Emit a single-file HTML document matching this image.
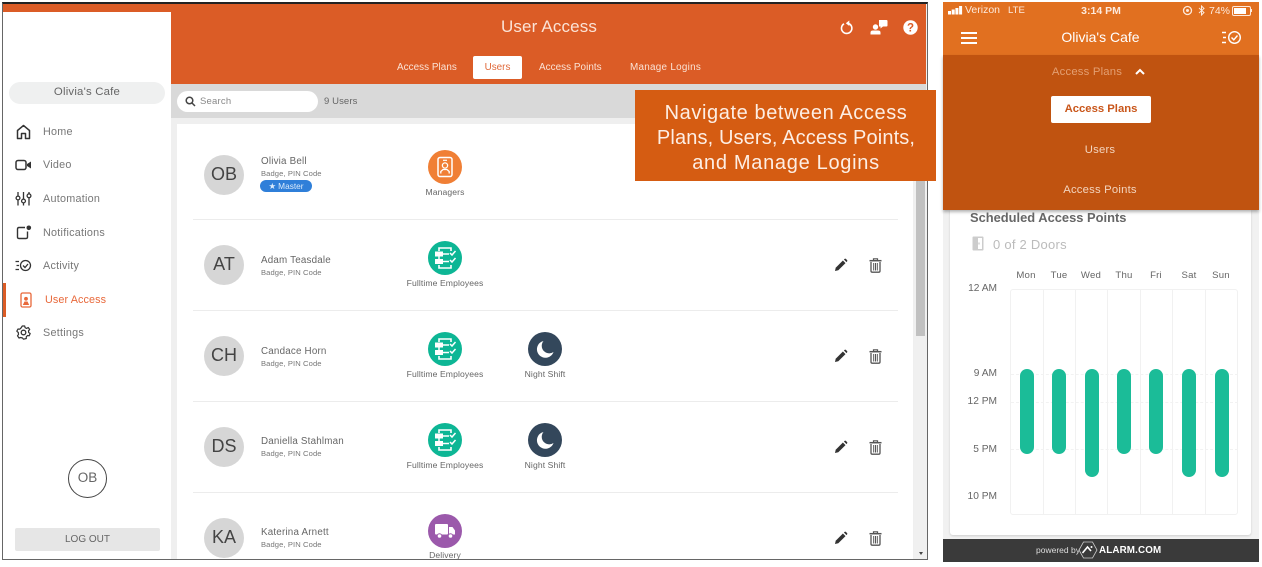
<!DOCTYPE html>
<html><head><meta charset="utf-8">
<style>
html,body{margin:0;padding:0;background:#fff}
#r{position:relative;width:1262px;height:567px;overflow:hidden;background:#fff;font-family:"Liberation Sans",sans-serif;color:#666}
#r div,#r svg{position:absolute}
.t{white-space:nowrap;line-height:1}
.c{transform:translateX(-50%);text-align:center}
.av{width:40px;height:40px;border-radius:50%;background:#d6d6d6;color:#444;font-size:18px;line-height:39px;text-align:center;left:204px}
.nm{left:261px;font-size:9.8px;color:#666;letter-spacing:.2px}
.sb{left:261px;font-size:7.6px;color:#777;letter-spacing:.1px}
.lb{font-size:8.6px;color:#666;letter-spacing:.1px}
.nav{left:43px;font-size:10.8px;color:#777;letter-spacing:.25px}
.sep{left:193px;width:705px;height:1px;background:#ececec}
.ic{width:34px;height:34px;border-radius:50%}
.tb{font-size:9.9px;color:#fbe3d6;letter-spacing:.05px}
.d{font-size:9.6px;color:#666;letter-spacing:.2px}
.h{font-size:10.2px;color:#666;width:40px;text-align:right;left:957px}
.v{top:290px;width:1px;height:225px;background:#f1f1f1}
.dh{left:1011px;width:227px;height:0;border-top:1px dashed #f2f2f2}
.b{top:369px;width:14px;border-radius:7px;background:#1bbc98}
</style></head><body><div id="r">

<!-- desktop window -->
<div style="left:2px;top:2px;width:926px;height:558px;background:#f0f0f0;box-sizing:border-box;border:1px solid #666;border-top:2px solid #222;overflow:hidden"></div>
<div style="left:3px;top:4px;width:923px;height:80px;background:#db5c26"></div>
<div style="left:171px;top:84px;width:755px;height:34px;background:#d9d9d9"></div>
<div style="left:171px;top:118px;width:755px;height:441px;background:#efefef"></div>
<div style="left:177px;top:124px;width:736px;height:435px;background:#fff"></div>
<div style="left:914px;top:118px;width:12px;height:441px;background:#f0f0f0"></div>
<div style="left:916px;top:124px;width:9px;height:212px;background:#c1c1c1"></div>
<div style="left:919px;top:552px;width:0;height:0;border-left:2.5px solid transparent;border-right:2.5px solid transparent;border-top:3px solid #444"></div>

<!-- sidebar -->
<div style="left:3px;top:12px;width:168px;height:547px;background:#fff"></div>
<div style="left:9px;top:82px;width:156px;height:22px;border-radius:11px;background:#eff0f0"></div>
<div class="t c" style="left:87px;top:87px;font-size:11.4px;color:#666;letter-spacing:.2px">Olivia's Cafe</div>

<svg style="left:16px;top:124px" width="15" height="16" viewBox="0 0 15 16" fill="none" stroke="#333" stroke-width="1.5"><path d="M1.5 14.5V6.5L7.5 1.5L13.5 6.5V14.5H9.5V9.5H5.5V14.5Z" stroke-linejoin="round"/></svg>
<div class="t nav" style="top:127px">Home</div>
<svg style="left:15px;top:159px" width="17" height="12" viewBox="0 0 17 12" fill="none"><rect x="1" y="1.5" width="10" height="9" rx="2" stroke="#333" stroke-width="1.5"/><path d="M12 5L16 2.5V9.5L12 7Z" fill="#333"/></svg>
<div class="t nav" style="top:160px">Video</div>
<svg style="left:15px;top:191px" width="17" height="15" viewBox="0 0 17 15" fill="none" stroke="#333" stroke-width="1.3"><path d="M3 1V4.5M3 9V14.5M8.500 1V8M8.500 12V14.500M14 1V2.500M14 7V14.500"/><circle cx="3" cy="7" r="1.900"/><circle cx="8.500" cy="10" r="1.900"/><circle cx="14" cy="4.800" r="1.900"/></svg>
<div class="t nav" style="top:194px">Automation</div>
<svg style="left:16px;top:225px" width="16" height="15" viewBox="0 0 16 15" fill="none"><path d="M9 2.500H3Q1.500 2.500 1.500 4V12Q1.500 13.500 3 13.500H10Q11.500 13.500 11.500 12V6.500" stroke="#333" stroke-width="1.400"/><circle cx="12.800" cy="2.800" r="2.300" fill="#333"/></svg>
<div class="t nav" style="top:228px">Notifications</div>
<svg style="left:15px;top:259px" width="17" height="13" viewBox="0 0 17 13" fill="none" stroke="#333" stroke-width="1.300"><path d="M0.500 2.500H4M1.500 6.500H4M0.500 10.500H4"/><circle cx="10.500" cy="6.500" r="5"/><path d="M8 6.500L10 8.500L13 5"/></svg>
<div class="t nav" style="top:261px">Activity</div>
<div style="left:3px;top:283px;width:3px;height:34px;background:#db5c26"></div>
<svg style="left:20px;top:292px" width="12" height="16" viewBox="0 0 12 16" fill="none"><rect x="1" y="1" width="10" height="14" rx="1.500" stroke="#e8683a" stroke-width="1.300"/><circle cx="6" cy="6.800" r="1.900" fill="#e8683a"/><path d="M2.800 13L4.500 9.500H7.500L9.200 13Z" fill="#e8683a"/></svg>
<div class="t nav" style="left:45px;top:295px;color:#e8683a;letter-spacing:.1px">User Access</div>
<svg style="left:16px;top:325px" width="15" height="15" viewBox="0 0 15 15" fill="none" stroke="#333"><circle cx="7.500" cy="7.500" r="2.300" stroke-width="1.300"/><path d="M6.300 1H8.700L9.100 2.700L10.700 3.400L12.200 2.500L13.700 4.500L12.500 5.800L12.700 7.500L14.200 8.500L13.200 10.800L11.500 10.500L10.300 11.800L10.300 13.500L7.500 14.200L6.500 13L4.700 12.500L3 13L1.500 10.800L2.500 9.500L2.300 7.500L0.800 6.200L2 4L3.700 4.200L5 3L6.300 1Z" stroke-width="1.200" stroke-linejoin="round"/></svg>
<div class="t nav" style="top:328px">Settings</div>

<div style="left:68px;top:459px;width:39px;height:39px;box-sizing:border-box;border:1.500px solid #444;border-radius:50%;text-align:center;line-height:35px;font-size:13.500px;color:#666">OB</div>
<div style="left:15px;top:528px;width:145px;height:23px;background:#e6e6e6;border-radius:2px;text-align:center;line-height:24px;font-size:10px;color:#666">LOG OUT</div>

<!-- header -->
<div class="t c" style="left:549px;top:18px;font-size:17px;color:#fbe3d6;letter-spacing:.15px">User Access</div>
<svg style="left:840px;top:20px" width="14" height="15" viewBox="0 0 14 15" fill="none"><path d="M4 3.800A5.200 5.200 0 1 0 9 3.600" stroke="#fff" stroke-width="1.600"/><path d="M8.300 0.500V6L4.800 3.200Z" fill="#fff" transform="translate(1 0)"/></svg>
<svg style="left:870px;top:19px" width="18" height="16" viewBox="0 0 18 16" fill="#fff"><path d="M9 1H16.500Q17.500 1 17.500 2V6.500Q17.500 7.500 16.500 7.500H13L10.500 9.500V7.500H9Z"/><circle cx="5.500" cy="8" r="2.700"/><path d="M0.500 15.500V13.500Q0.500 11.500 3 11.500H8Q10.500 11.500 10.500 13.500V15.500Z"/></svg>
<svg style="left:903px;top:20px" width="15" height="15" viewBox="0 0 15 15"><circle cx="7.500" cy="7.500" r="7.200" fill="#fff"/><text x="7.500" y="11.600" font-size="11.500" font-weight="700" fill="#db5c26" text-anchor="middle" font-family="Liberation Sans">?</text></svg>

<div class="t tb" style="left:397px;top:63px">Access Plans</div>
<div style="left:473px;top:56px;width:49px;height:23px;background:#fff;border-radius:2px;text-align:center;line-height:23px;font-size:9.900px;color:#e0693a">Users</div>
<div class="t tb" style="left:539px;top:63px">Access Points</div>
<div class="t tb" style="left:630px;top:63px;letter-spacing:.27px">Manage Logins</div>

<!-- search -->
<div style="left:177px;top:91px;width:141px;height:21px;background:#fff;border-radius:11px"></div>
<svg style="left:185px;top:96px" width="11" height="11" viewBox="0 0 11 11" fill="none" stroke="#444" stroke-width="1.500"><circle cx="4.500" cy="4.500" r="3.300"/><path d="M7 7L10 10"/></svg>
<div class="t" style="left:200px;top:97px;font-size:9.500px;color:#888;letter-spacing:.2px">Search</div>
<div class="t" style="left:324px;top:97px;font-size:9.500px;color:#666;letter-spacing:.1px">9 Users</div>

<!-- rows -->
<div class="sep" style="top:219px"></div>
<div class="sep" style="top:310px"></div>
<div class="sep" style="top:401px"></div>
<div class="sep" style="top:492px"></div>

<div class="av" style="top:155px">OB</div>
<div class="t nm" style="top:157px">Olivia Bell</div>
<div class="t sb" style="top:170px">Badge, PIN Code</div>
<div style="left:260px;top:180px;width:52px;height:12px;border-radius:6px;background:#2f7fd9;color:#dcebfb;font-size:8.300px;line-height:12px;text-align:center;white-space:nowrap">★ Master</div>
<div class="ic" style="left:428px;top:150px;background:#f07f35"></div>
<svg style="left:436px;top:156px" width="18" height="22" viewBox="0 0 18 22" fill="none"><rect x="2" y="1.500" width="14" height="19" rx="2" stroke="#fff" stroke-width="1.500"/><path d="M7 4.300H11" stroke="#fff" stroke-width="1.200"/><circle cx="9" cy="9.500" r="2.600" stroke="#fff" stroke-width="1.300"/><path d="M4.800 17.500V15.500L7 13.500H11L13.200 15.500V17.500" stroke="#fff" stroke-width="1.300"/></svg>
<div class="t lb c" style="left:445px;top:188px">Managers</div>

<div class="av" style="top:245px">AT</div>
<div class="t nm" style="top:256px">Adam Teasdale</div>
<div class="t sb" style="top:269px">Badge, PIN Code</div>
<div class="ic" style="left:428px;top:241px;background:#0db695"></div>
<svg style="left:428px;top:241px" width="34" height="34" viewBox="0 0 34 34" fill="none" stroke="#fff"><path d="M11 10V7H23V10M23 24V27H11V24" stroke-width="1.600"/><rect x="7" y="10.500" width="8" height="5" fill="#fff" stroke="none"/><rect x="7" y="18" width="8" height="5" fill="#fff" stroke="none"/><path d="M11 15V18.500M15 13H21M15 20.500H21" stroke-width="1.500"/><path d="M22 12L24 14L27.500 10M22 19L24 21L27.500 17" stroke-width="1.500"/></svg>
<div class="t lb c" style="left:445px;top:279px">Fulltime Employees</div>

<div class="av" style="top:336px">CH</div>
<div class="t nm" style="top:347px">Candace Horn</div>
<div class="t sb" style="top:360px">Badge, PIN Code</div>
<div class="ic" style="left:428px;top:332px;background:#0db695"></div>
<svg style="left:428px;top:332px" width="34" height="34" viewBox="0 0 34 34" fill="none" stroke="#fff"><path d="M11 10V7H23V10M23 24V27H11V24" stroke-width="1.600"/><rect x="7" y="10.500" width="8" height="5" fill="#fff" stroke="none"/><rect x="7" y="18" width="8" height="5" fill="#fff" stroke="none"/><path d="M11 15V18.500M15 13H21M15 20.500H21" stroke-width="1.500"/><path d="M22 12L24 14L27.500 10M22 19L24 21L27.500 17" stroke-width="1.500"/></svg>
<div class="t lb c" style="left:445px;top:370px">Fulltime Employees</div>
<div class="ic" style="left:528px;top:332px;background:#33475b"></div>
<svg style="left:534px;top:338px" width="22" height="22" viewBox="0 0 22 22"><path d="M9.500 3A8.500 8.500 0 1 0 19.500 14A7.500 7.500 0 0 1 9.500 3Z" fill="#fff"/></svg>
<div class="t lb c" style="left:545px;top:370px">Night Shift</div>

<div class="av" style="top:427px">DS</div>
<div class="t nm" style="top:437px">Daniella Stahlman</div>
<div class="t sb" style="top:450px">Badge, PIN Code</div>
<div class="ic" style="left:428px;top:423px;background:#0db695"></div>
<svg style="left:428px;top:423px" width="34" height="34" viewBox="0 0 34 34" fill="none" stroke="#fff"><path d="M11 10V7H23V10M23 24V27H11V24" stroke-width="1.600"/><rect x="7" y="10.500" width="8" height="5" fill="#fff" stroke="none"/><rect x="7" y="18" width="8" height="5" fill="#fff" stroke="none"/><path d="M11 15V18.500M15 13H21M15 20.500H21" stroke-width="1.500"/><path d="M22 12L24 14L27.500 10M22 19L24 21L27.500 17" stroke-width="1.500"/></svg>
<div class="t lb c" style="left:445px;top:461px">Fulltime Employees</div>
<div class="ic" style="left:528px;top:423px;background:#33475b"></div>
<svg style="left:534px;top:429px" width="22" height="22" viewBox="0 0 22 22"><path d="M9.500 3A8.500 8.500 0 1 0 19.500 14A7.500 7.500 0 0 1 9.500 3Z" fill="#fff"/></svg>
<div class="t lb c" style="left:545px;top:461px">Night Shift</div>

<div class="av" style="top:518px">KA</div>
<div class="t nm" style="top:528px">Katerina Arnett</div>
<div class="t sb" style="top:541px">Badge, PIN Code</div>
<div class="ic" style="left:428px;top:514px;background:#9b59ab"></div>
<svg style="left:434px;top:522px" width="22" height="18" viewBox="0 0 22 18" fill="#fff"><rect x="1" y="2" width="13" height="10.500" rx="1"/><path d="M15 5H18.500L21 8.500V12.500H15Z"/><circle cx="5.500" cy="14" r="2.300" stroke="#9b59ab" stroke-width="1"/><circle cx="16.500" cy="14" r="2.300" stroke="#9b59ab" stroke-width="1"/></svg>
<div class="t lb c" style="left:445px;top:551px">Delivery</div>
<div style="left:400px;top:559px;width:100px;height:1px;background:#666"></div>

<!-- edit + trash icons -->
<svg style="left:834px;top:258px" width="14" height="14" viewBox="0 0 14 14" fill="#333"><path d="M1 13L1.700 9.700L8.900 2.500L11.500 5.100L4.300 12.300Z"/><path d="M9.900 1.500L10.800 0.800Q11.400 0.400 11.900 0.900L13.100 2.100Q13.600 2.600 13.200 3.200L12.500 4.100Z"/></svg>
<svg style="left:834px;top:349px" width="14" height="14" viewBox="0 0 14 14" fill="#333"><path d="M1 13L1.700 9.700L8.900 2.500L11.500 5.100L4.300 12.300Z"/><path d="M9.900 1.500L10.800 0.800Q11.400 0.400 11.900 0.900L13.100 2.100Q13.600 2.600 13.200 3.200L12.500 4.100Z"/></svg>
<svg style="left:834px;top:440px" width="14" height="14" viewBox="0 0 14 14" fill="#333"><path d="M1 13L1.700 9.700L8.900 2.500L11.500 5.100L4.300 12.300Z"/><path d="M9.900 1.500L10.800 0.800Q11.400 0.400 11.900 0.900L13.100 2.100Q13.600 2.600 13.200 3.200L12.500 4.100Z"/></svg>
<svg style="left:834px;top:531px" width="14" height="14" viewBox="0 0 14 14" fill="#333"><path d="M1 13L1.700 9.700L8.900 2.500L11.500 5.100L4.300 12.300Z"/><path d="M9.900 1.500L10.800 0.800Q11.400 0.400 11.900 0.900L13.100 2.100Q13.600 2.600 13.200 3.200L12.500 4.100Z"/></svg>
<svg style="left:869px;top:258px" width="13" height="15" viewBox="0 0 13 15" fill="none" stroke="#555"><path d="M0.500 2.700H12.500" stroke-width="1.500"/><path d="M4.500 2V0.800H8.500V2" stroke-width="1.200"/><path d="M2 4V13Q2 14.200 3.200 14.200H9.800Q11 14.200 11 13V4" stroke-width="1.300"/><path d="M4.700 5V12.500M6.500 5V12.500M8.300 5V12.500" stroke-width="1"/></svg>
<svg style="left:869px;top:349px" width="13" height="15" viewBox="0 0 13 15" fill="none" stroke="#555"><path d="M0.500 2.700H12.500" stroke-width="1.500"/><path d="M4.500 2V0.800H8.500V2" stroke-width="1.200"/><path d="M2 4V13Q2 14.200 3.200 14.200H9.800Q11 14.200 11 13V4" stroke-width="1.300"/><path d="M4.700 5V12.500M6.500 5V12.500M8.300 5V12.500" stroke-width="1"/></svg>
<svg style="left:869px;top:440px" width="13" height="15" viewBox="0 0 13 15" fill="none" stroke="#555"><path d="M0.500 2.700H12.500" stroke-width="1.500"/><path d="M4.500 2V0.800H8.500V2" stroke-width="1.200"/><path d="M2 4V13Q2 14.200 3.200 14.200H9.800Q11 14.200 11 13V4" stroke-width="1.300"/><path d="M4.700 5V12.500M6.500 5V12.500M8.300 5V12.500" stroke-width="1"/></svg>
<svg style="left:869px;top:531px" width="13" height="15" viewBox="0 0 13 15" fill="none" stroke="#555"><path d="M0.500 2.700H12.500" stroke-width="1.500"/><path d="M4.500 2V0.800H8.500V2" stroke-width="1.200"/><path d="M2 4V13Q2 14.200 3.200 14.200H9.800Q11 14.200 11 13V4" stroke-width="1.300"/><path d="M4.700 5V12.500M6.500 5V12.500M8.300 5V12.500" stroke-width="1"/></svg>

<!-- callout -->
<div style="left:635px;top:90px;width:301px;height:91px;background:#d55c12"></div>
<div class="t c" style="left:786px;top:103px;font-size:20px;color:#fdeee4;letter-spacing:.6px">Navigate between Access</div>
<div class="t c" style="left:786px;top:128px;font-size:20px;color:#fdeee4;letter-spacing:.13px">Plans, Users, Access Points,</div>
<div class="t c" style="left:786px;top:153px;font-size:20px;color:#fdeee4;letter-spacing:.7px">and Manage Logins</div>

<!-- phone -->
<div style="left:943px;top:2px;width:316px;height:560px;background:#f1f1f1"></div>
<div style="left:943px;top:2px;width:316px;height:53px;background:#e17020"></div>
<div style="left:943px;top:55px;width:316px;height:155px;background:#c05310;box-shadow:0 2px 3px rgba(0,0,0,.3);z-index:2"></div>
<div style="left:950px;top:210px;width:301px;height:325px;background:#fff;border-radius:0 0 3px 3px;box-shadow:0 1px 2px rgba(0,0,0,.15)"></div>
<div style="left:943px;top:539px;width:316px;height:23px;background:#3a3a3a"></div>

<svg style="left:948px;top:6px" width="15" height="9" viewBox="0 0 15 9" fill="#fff"><rect x="0" y="5" width="3" height="3.500"/><rect x="3.700" y="3.500" width="3" height="5"/><rect x="7.400" y="2" width="3" height="6.500"/><rect x="11.100" y="0" width="3" height="8.500"/></svg>
<div class="t" style="left:965px;top:5px;font-size:10.500px;color:#fdeadd">Verizon</div>
<div class="t" style="left:1008px;top:6px;font-size:9.600px;color:#fdeadd">LTE</div>
<div class="t c" style="left:1101px;top:6px;font-size:10.500px;font-weight:700;color:#fdeadd">3:14 PM</div>
<svg style="left:1182px;top:5px" width="11" height="11" viewBox="0 0 11 11" fill="none" stroke="#fdeadd"><circle cx="5.500" cy="5.500" r="4" stroke-width="1.300"/><circle cx="5.500" cy="5.500" r="1.500" fill="#fdeadd" stroke="none"/></svg>
<svg style="left:1198px;top:5px" width="7" height="11" viewBox="0 0 7 11" fill="none" stroke="#fdeadd" stroke-width="1"><path d="M1 3L6 7.500L3.500 10V1L6 3.500L1 8"/></svg>
<div class="t" style="left:1209px;top:6px;font-size:10.500px;color:#fdeadd">74%</div>
<div style="left:1232px;top:6px;width:17px;height:8px;border:1px solid #fdeadd;border-radius:2px"></div>
<div style="left:1233.500px;top:7.500px;width:12px;height:6px;background:#fff"></div>
<div style="left:1251px;top:9px;width:1px;height:3px;background:#fdeadd"></div>

<div style="left:961px;top:32px;width:16px;height:2px;background:#fff"></div>
<div style="left:961px;top:37px;width:16px;height:2px;background:#fff"></div>
<div style="left:961px;top:42px;width:16px;height:2px;background:#fff"></div>
<div class="t c" style="left:1100.500px;top:30px;font-size:14px;color:#fff">Olivia's Cafe</div>
<svg style="left:1222px;top:30px" width="20" height="15" viewBox="0 0 20 15" fill="none" stroke="#fff" stroke-width="1.400"><path d="M0 2.500H4M1 7.500H4M0 12.500H4"/><circle cx="12.500" cy="7.500" r="5.800"/><path d="M9.500 7.500L11.800 9.800L15.500 5.500"/></svg>

<div class="t c" style="left:1087px;top:67px;font-size:11.300px;color:#e39f72;letter-spacing:.2px;z-index:3">Access Plans</div>
<svg style="left:1135px;top:68px;z-index:3" width="10" height="7" viewBox="0 0 10 7" fill="none" stroke="#fff" stroke-width="2"><path d="M1 6L5 2L9 6"/></svg>
<div style="left:1051px;top:96px;width:100px;height:27px;background:#fff;border-radius:2px;text-align:center;line-height:27px;font-size:11.300px;font-weight:700;color:#c9561a;z-index:3">Access Plans</div>
<div class="t c" style="left:1100px;top:145px;font-size:11.300px;color:#f3d5bf;letter-spacing:.2px;z-index:3">Users</div>
<div class="t c" style="left:1100px;top:185px;font-size:11.300px;color:#f3d5bf;letter-spacing:.2px;z-index:3">Access Points</div>

<div class="t" style="left:970px;top:212px;font-size:12.900px;font-weight:700;color:#666;z-index:3">Scheduled Access Points</div>
<svg style="left:972px;top:236px" width="12" height="15" viewBox="0 0 12 15"><rect x="0.500" y="0.500" width="11" height="14" rx="1" fill="#ccc"/><rect x="6" y="2" width="4" height="11" fill="#fff"/><rect x="6.500" y="6.500" width="1" height="2" fill="#bbb"/></svg>
<div class="t" style="left:993px;top:238px;font-size:13px;color:#bbb;letter-spacing:.25px">0 of 2 Doors</div>

<div class="t d c" style="left:1026px;top:271px">Mon</div>
<div class="t d c" style="left:1059px;top:271px">Tue</div>
<div class="t d c" style="left:1091px;top:271px">Wed</div>
<div class="t d c" style="left:1124px;top:271px">Thu</div>
<div class="t d c" style="left:1156px;top:271px">Fri</div>
<div class="t d c" style="left:1189px;top:271px">Sat</div>
<div class="t d c" style="left:1221px;top:271px">Sun</div>

<div class="t h" style="top:284px">12 AM</div>
<div class="t h" style="top:369px">9 AM</div>
<div class="t h" style="top:397px">12 PM</div>
<div class="t h" style="top:445px">5 PM</div>
<div class="t h" style="top:492px">10 PM</div>

<div style="left:1010px;top:289px;width:228px;height:226px;box-sizing:border-box;border:1px solid #f1f1f1;border-radius:3px"></div>
<div class="v" style="left:1043px"></div>
<div class="v" style="left:1075px"></div>
<div class="v" style="left:1107px"></div>
<div class="v" style="left:1140px"></div>
<div class="v" style="left:1172px"></div>
<div class="v" style="left:1205px"></div>
<div class="dh" style="top:374px"></div>
<div class="dh" style="top:402px"></div>
<div class="dh" style="top:449px"></div>
<div class="b" style="left:1020px;height:85px"></div>
<div class="b" style="left:1052px;height:85px"></div>
<div class="b" style="left:1085px;height:108px"></div>
<div class="b" style="left:1117px;height:85px"></div>
<div class="b" style="left:1149px;height:85px"></div>
<div class="b" style="left:1182px;height:108px"></div>
<div class="b" style="left:1215px;height:108px"></div>

<div class="t" style="left:1036px;top:546px;font-size:8.500px;color:#ddd">powered by</div>
<svg style="left:1078px;top:541px" width="20" height="18" viewBox="0 0 20 18" fill="none" stroke="#ccc"><path d="M5.500 1H14.500L19 9L14.500 17H5.500L1 9Z" stroke-width=".8"/><path d="M4.500 12L9.500 6L13 10" stroke="#fff" stroke-width="1.600"/><circle cx="13.500" cy="6" r="1" fill="#fff" stroke="none"/></svg>
<div class="t" style="left:1099px;top:546px;font-size:9.800px;font-weight:700;color:#fff;letter-spacing:.15px">ALARM.COM</div>

</div></body></html>
